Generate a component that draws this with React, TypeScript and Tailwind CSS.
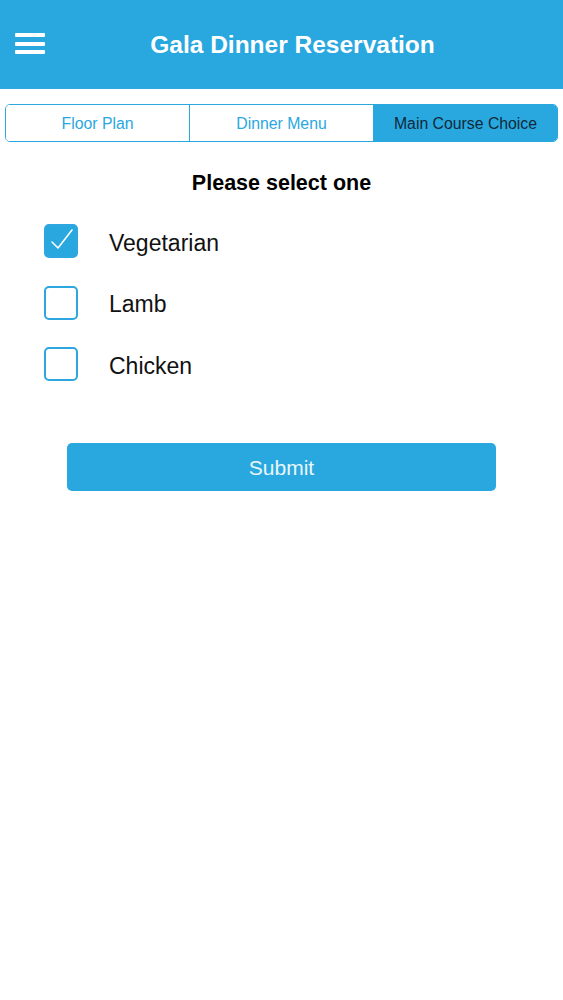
import { useState } from "react";

const tabs = ["Floor Plan", "Dinner Menu", "Main Course Choice"];
const options = ["Vegetarian", "Lamb", "Chicken"];

export default function App() {
  const [active, setActive] = useState(2);
  const [choice, setChoice] = useState(0);

  return (
    <div className="w-[563px] min-h-[1000px] bg-white font-['Liberation_Sans',Arial,sans-serif]">
      {/* Header */}
      <header className="h-[89px] bg-[#29a8e0] flex items-center relative">
        <button className="absolute left-[15px] top-[33px] w-[30px] h-[21px] flex flex-col justify-between">
          <span className="block h-[4px] w-full bg-white rounded-[1px]" />
          <span className="block h-[4px] w-full bg-white rounded-[1px]" />
          <span className="block h-[4px] w-full bg-white rounded-[1px]" />
        </button>
        <h1 className="w-full text-center text-white font-bold text-[24.5px] pl-[22px] pt-[2px]">
          Gala Dinner Reservation
        </h1>
      </header>

      {/* Segmented control */}
      <div className="mt-[15px] mx-[5px] h-[38px] flex border-[1.5px] border-[#29a8e0] rounded-[5px] overflow-hidden">
        {tabs.map((t, i) => (
          <button
            key={t}
            onClick={() => setActive(i)}
            className={
              "flex-1 text-[15.8px] pt-[1px] flex items-center justify-center " +
              (i > 0 ? "border-l-[1.5px] border-[#29a8e0] " : "") +
              (active === i ? "bg-[#29a8e0] text-[#0f2a3a]" : "bg-white text-[#29a8e0]")
            }
          >
            {t}
          </button>
        ))}
      </div>

      <h2 className="mt-[25px] text-center font-bold text-[21.5px] text-black">Please select one</h2>

      {/* Options */}
      <div className="mt-[25px] flex flex-col gap-[27.5px] pl-[44px]">
        {options.map((o, i) => (
          <label key={o} className="h-[34px] flex items-center gap-[31px] cursor-pointer" onClick={() => setChoice(i)}>
            <span
              className={
                "w-[34px] h-[34px] rounded-[5px] border-[2.5px] border-[#2ea6df] flex items-center justify-center " +
                (choice === i ? "bg-[#29a8e0]" : "bg-white")
              }
            >
              {choice === i && (
                <svg width="28" height="28" viewBox="0 0 28 28" fill="none">
                  <path d="M5 15 L11 21 L25 3" stroke="white" strokeWidth="1.6" strokeLinecap="round" strokeLinejoin="round" />
                </svg>
              )}
            </span>
            <span className="text-[23px] leading-[28px] pt-[3px] text-[#111]">{o}</span>
          </label>
        ))}
      </div>

      <div className="mt-[62px] px-[67px]">
        <button className="w-full h-[48px] rounded-[5px] bg-[#29a8e0] text-[#eaf6fc] text-[21px]">Submit</button>
      </div>
    </div>
  );
}
